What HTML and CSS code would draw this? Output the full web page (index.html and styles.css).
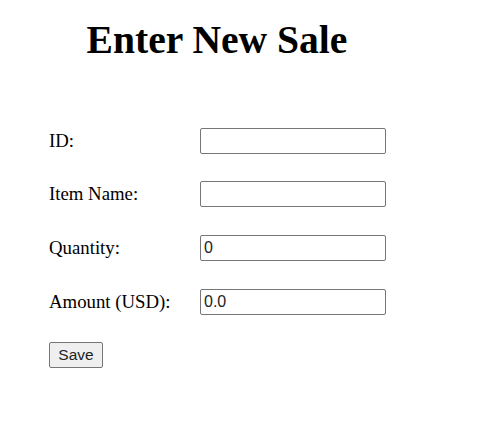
FILE: index.html
```html
<!DOCTYPE html>
<html>
<head>
<meta charset="utf-8">
<link rel="stylesheet" href="styles.css">
<title>Enter New Sale</title>
</head>
<body>
<div class="page">
  <h1 class="title">Enter New Sale</h1>
  <form class="sale-form">
    <div class="fields">
      <label class="label" for="id">ID:</label>
      <input class="field" id="id" type="text" value="">
      <label class="label" for="name">Item Name:</label>
      <input class="field" id="name" type="text" value="">
      <label class="label" for="qty">Quantity:</label>
      <input class="field" id="qty" type="text" value="0">
      <label class="label" for="amt">Amount (USD):</label>
      <input class="field" id="amt" type="text" value="0.0">
    </div>
    <button class="save" type="button">Save</button>
  </form>
</div>
</body>
</html>
```
FILE: styles.css
```css
html, body {
  margin: 0;
  padding: 0;
  background: #ffffff;
}
body {
  font-family: "Liberation Serif", "Times New Roman", serif;
  color: #000000;
}
.page {
  width: 336px;
  padding: 18px 0 0 49px;
}
.title {
  margin: 0;
  font-size: 39.6px;
  line-height: 45px;
  font-weight: bold;
  text-align: center;
}
.sale-form {
  margin-top: 64.5px;
  display: flex;
  flex-direction: column;
  align-items: flex-start;
}
.fields {
  display: grid;
  grid-template-columns: 151px 186px;
  row-gap: 27.7px;
  align-items: center;
}
.label {
  font-size: 18.8px;
  line-height: 22px;
}
.field {
  box-sizing: border-box;
  width: 186px;
  height: 26px;
  margin: 0;
  padding: 1px 3px;
  border: 1px solid #767676;
  border-radius: 2px;
  font-family: "Liberation Sans", Arial, sans-serif;
  font-size: 16px;
  color: #222222;
  background: #ffffff;
}
.save {
  box-sizing: border-box;
  margin-top: 27.5px;
  width: 54px;
  height: 26px;
  padding: 0;
  border: 1px solid #767676;
  border-radius: 2px;
  background: #efefef;
  font-family: "Liberation Sans", Arial, sans-serif;
  font-size: 15.5px;
  color: #222222;
}
```
